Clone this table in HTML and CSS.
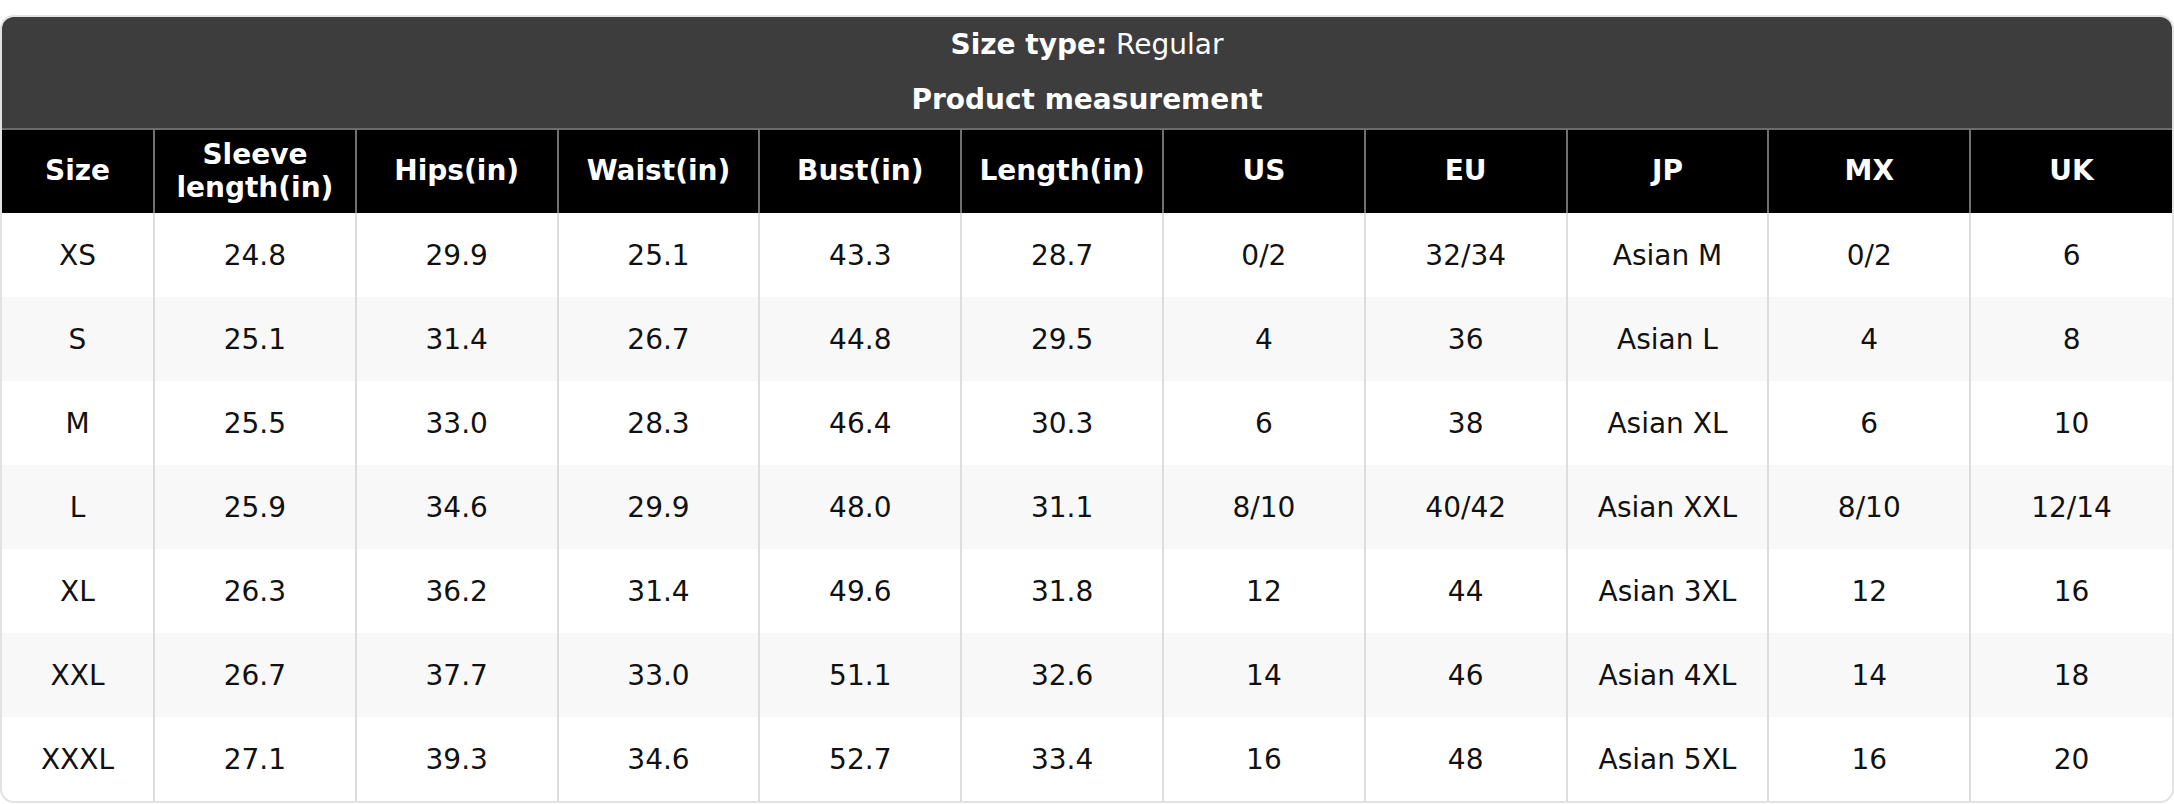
FILE: index.html
```html
<!DOCTYPE html>
<html>
<head>
<meta charset="utf-8">
<link rel="stylesheet" href="styles.css">
</head>
<body>
<div class="card">
  <div class="card-head">
    <div class="line"><b>Size type:</b> Regular</div>
    <div class="line"><b>Product measurement</b></div>
  </div>
  <table class="size-table">
    <colgroup>
      <col class="c-size">
      <col><col><col><col><col><col><col><col><col><col>
    </colgroup>
    <thead>
      <tr>
        <th>Size</th><th>Sleeve length(in)</th><th>Hips(in)</th><th>Waist(in)</th><th>Bust(in)</th><th>Length(in)</th><th>US</th><th>EU</th><th>JP</th><th>MX</th><th>UK</th>
      </tr>
    </thead>
    <tbody>
      <tr><td>XS</td><td>24.8</td><td>29.9</td><td>25.1</td><td>43.3</td><td>28.7</td><td>0/2</td><td>32/34</td><td>Asian M</td><td>0/2</td><td>6</td></tr>
      <tr><td>S</td><td>25.1</td><td>31.4</td><td>26.7</td><td>44.8</td><td>29.5</td><td>4</td><td>36</td><td>Asian L</td><td>4</td><td>8</td></tr>
      <tr><td>M</td><td>25.5</td><td>33.0</td><td>28.3</td><td>46.4</td><td>30.3</td><td>6</td><td>38</td><td>Asian XL</td><td>6</td><td>10</td></tr>
      <tr><td>L</td><td>25.9</td><td>34.6</td><td>29.9</td><td>48.0</td><td>31.1</td><td>8/10</td><td>40/42</td><td>Asian XXL</td><td>8/10</td><td>12/14</td></tr>
      <tr><td>XL</td><td>26.3</td><td>36.2</td><td>31.4</td><td>49.6</td><td>31.8</td><td>12</td><td>44</td><td>Asian 3XL</td><td>12</td><td>16</td></tr>
      <tr><td>XXL</td><td>26.7</td><td>37.7</td><td>33.0</td><td>51.1</td><td>32.6</td><td>14</td><td>46</td><td>Asian 4XL</td><td>14</td><td>18</td></tr>
      <tr><td>XXXL</td><td>27.1</td><td>39.3</td><td>34.6</td><td>52.7</td><td>33.4</td><td>16</td><td>48</td><td>Asian 5XL</td><td>16</td><td>20</td></tr>
    </tbody>
  </table>
</div>
</body>
</html>
```
FILE: styles.css
```css
html, body {
  margin: 0;
  padding: 0;
  background: #ffffff;
}
body {
  padding-top: 15px;
  font-family: "DejaVu Sans", Verdana, sans-serif;
  color: #000;
}
.card {
  border: 2px solid #e2e2e2;
  border-radius: 14px;
  overflow: hidden;
  background: #fff;
}
.card-head {
  background: #3d3d3d;
  color: #fff;
  text-align: center;
  font-size: 28px;
  padding-bottom: 1px;
  border-bottom: 2px solid #6b6b6b;
}
.card-head .line {
  height: 55px;
  line-height: 55px;
}
.card-head b {
  font-weight: bold;
}
.size-table {
  width: 100%;
  table-layout: fixed;
  border-collapse: collapse;
  font-size: 28px;
}
.size-table .c-size {
  width: 152px;
}
.size-table th {
  background: #000;
  color: #fff;
  font-weight: bold;
  height: 83px;
  line-height: 1.15;
  padding: 0 10px;
  text-align: center;
  vertical-align: middle;
  border-left: 2px solid #707070;
}
.size-table td {
  height: 84px;
  padding: 0 8px;
  text-align: center;
  vertical-align: middle;
  color: #111;
  border-left: 2px solid #dddddd;
}
.size-table th:first-child,
.size-table td:first-child {
  border-left: none;
}
.size-table tbody tr:nth-child(even) td {
  background: #f8f8f8;
}
```
